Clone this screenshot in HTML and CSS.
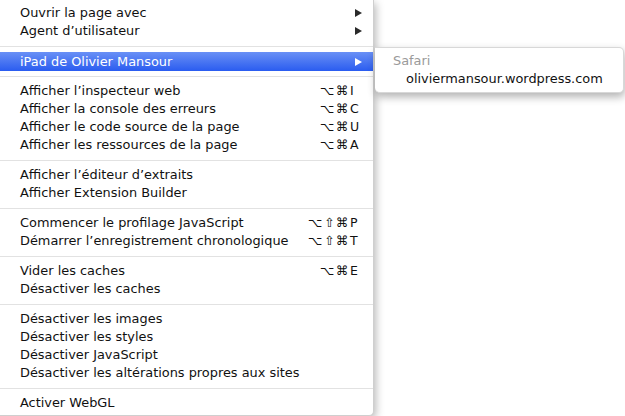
FILE: index.html
```html
<!DOCTYPE html>
<html lang="fr">
<head>
<meta charset="utf-8">
<title>Menu Développement</title>
<link rel="stylesheet" href="styles.css">
</head>
<body>
<div class="screen">
  <div class="menu">
    <div class="item"><span class="label">Ouvrir la page avec</span><span class="arrow"></span></div>
    <div class="item"><span class="label">Agent d’utilisateur</span><span class="arrow"></span></div>
    <div class="sep"></div>
    <div class="item selected"><span class="label">iPad de Olivier Mansour</span><span class="arrow"></span></div>
    <div class="sep"></div>
    <div class="item"><span class="label">Afficher l’inspecteur web</span><span class="keys"><span class="mods">⌥⌘</span><span class="key">I</span></span></div>
    <div class="item"><span class="label">Afficher la console des erreurs</span><span class="keys"><span class="mods">⌥⌘</span><span class="key">C</span></span></div>
    <div class="item"><span class="label">Afficher le code source de la page</span><span class="keys"><span class="mods">⌥⌘</span><span class="key">U</span></span></div>
    <div class="item"><span class="label">Afficher les ressources de la page</span><span class="keys"><span class="mods">⌥⌘</span><span class="key">A</span></span></div>
    <div class="sep"></div>
    <div class="item"><span class="label">Afficher l’éditeur d’extraits</span></div>
    <div class="item"><span class="label">Afficher Extension Builder</span></div>
    <div class="sep"></div>
    <div class="item"><span class="label">Commencer le profilage JavaScript</span><span class="keys"><span class="mods">⌥⇧⌘</span><span class="key">P</span></span></div>
    <div class="item"><span class="label">Démarrer l’enregistrement chronologique</span><span class="keys"><span class="mods">⌥⇧⌘</span><span class="key">T</span></span></div>
    <div class="sep"></div>
    <div class="item"><span class="label">Vider les caches</span><span class="keys"><span class="mods">⌥⌘</span><span class="key">E</span></span></div>
    <div class="item"><span class="label">Désactiver les caches</span></div>
    <div class="sep"></div>
    <div class="item"><span class="label">Désactiver les images</span></div>
    <div class="item"><span class="label">Désactiver les styles</span></div>
    <div class="item"><span class="label">Désactiver JavaScript</span></div>
    <div class="item"><span class="label">Désactiver les altérations propres aux sites</span></div>
    <div class="sep"></div>
    <div class="item"><span class="label">Activer WebGL</span></div>
  </div>
  <div class="submenu">
    <div class="item header"><span class="label">Safari</span></div>
    <div class="item child"><span class="label">oliviermansour.wordpress.com</span></div>
  </div>
</div>
</body>
</html>
```
FILE: styles.css
```css
html, body {
  margin: 0;
  padding: 0;
  background: #ffffff;
}
body {
  font-family: "DejaVu Sans", "Liberation Sans", sans-serif;
  font-size: 12.9px;
  color: #111;
}
.screen {
  position: relative;
  width: 625px;
  height: 416px;
  overflow: hidden;
}
.menu {
  width: 373px;
  padding: 4px 0 3px;
  background: #ffffff;
  border-right: 1px solid #cfcfcf;
  border-bottom: 1px solid #cfcfcf;
  border-radius: 0 0 5px 0;
  box-shadow: 2px 3px 8px rgba(0, 0, 0, 0.28);
  display: flex;
  flex-direction: column;
}
.item {
  height: 18px;
  line-height: 18px;
  padding: 0 11px 0 20px;
  display: flex;
  align-items: center;
  white-space: nowrap;
}
.item .label {
  flex: 1;
}
.arrow {
  width: 0;
  height: 0;
  border-top: 4px solid transparent;
  border-bottom: 4px solid transparent;
  border-left: 7px solid #2a2a2a;
}
.selected {
  color: #ffffff;
  background: linear-gradient(to bottom, #6990f6 0%, #4a76f2 50%, #2a5cf0 100%);
  height: 19px;
  margin-bottom: -1px;
  position: relative;
}
.selected .arrow {
  border-left-color: #ffffff;
}
.keys {
  display: flex;
  font-size: 12.5px;
}
.mods {
  letter-spacing: 1.5px;
  text-align: right;
}
.key {
  width: 12px;
  text-align: left;
}
.sep {
  height: 12px;
  display: flex;
  align-items: center;
}
.sep::before {
  content: "";
  display: block;
  width: 100%;
  height: 1px;
  background: #e2e2e2;
}
.submenu {
  position: absolute;
  left: 375px;
  top: 47px;
  width: 248px;
  padding: 4px 0;
  background: #ffffff;
  border: 1px solid #d8d8d8;
  border-left: none;
  border-radius: 0 5px 5px 5px;
  box-shadow: 1px 4px 9px rgba(0, 0, 0, 0.3);
  display: flex;
  flex-direction: column;
}
.submenu .item {
  padding-left: 18px;
}
.submenu .header {
  color: #9a9a9a;
}
.submenu .child {
  padding-left: 31px;
}
```
